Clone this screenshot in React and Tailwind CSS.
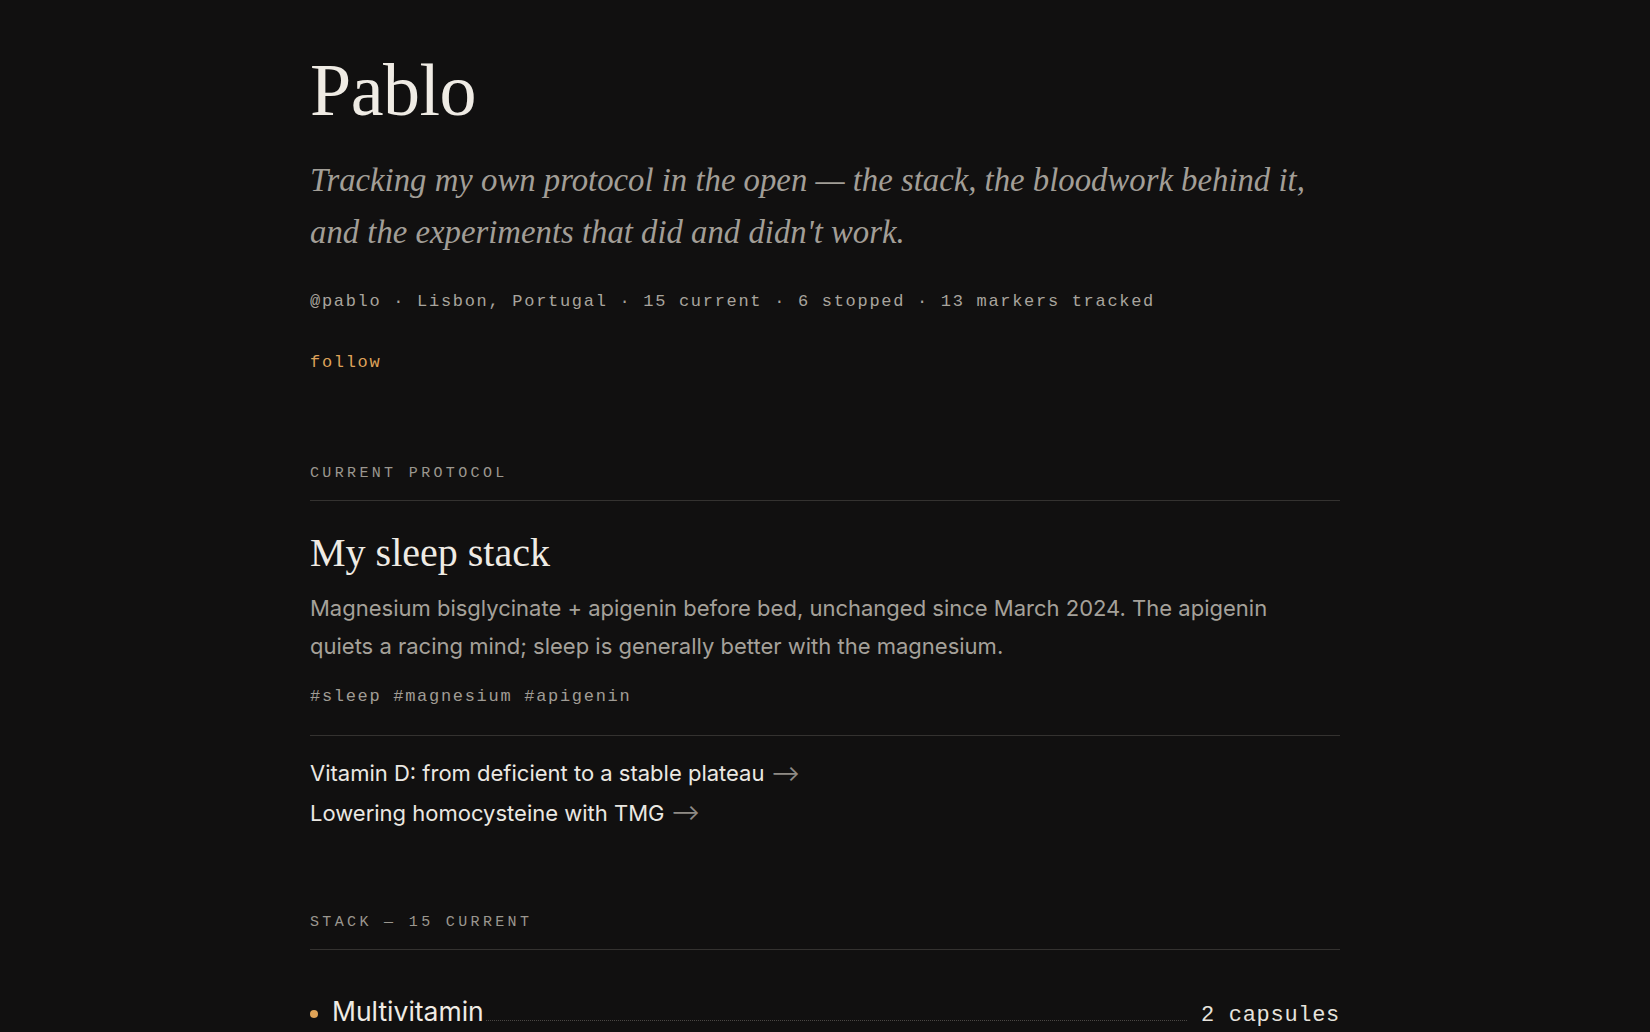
const serif = "font-['Liberation_Serif','DejaVu_Serif',serif]";
const sans = "font-['Inter','Liberation_Sans',sans-serif]";
const mono = "font-['Liberation_Mono','DejaVu_Sans_Mono',monospace]";

const links = [
  "Vitamin D: from deficient to a stable plateau",
  "Lowering homocysteine with TMG",
];

export default function App() {
  return (
    <div className="min-h-screen bg-[#111010] text-[#ece8e1]">
      <main className="w-[1030px] mx-auto pt-[53px] pb-16">
        {/* header */}
        <h1 className={`${serif} text-[74px] leading-none tracking-[-0.5px] text-[#efebe4]`}>
          Pablo
        </h1>
        <p className={`${serif} italic text-[32.75px] leading-[52px] mt-[27px] max-w-[1010px] text-[#a29e97]`}>
          Tracking my own protocol in the open — the stack, the bloodwork behind it,
          and the experiments that did and didn't work.
        </p>
        <p className={`${mono} text-[17px] leading-[28px] tracking-[1.7px] mt-[30px] text-[#a8a49d]`}>
          @pablo · Lisbon, Portugal · 15 current · 6 stopped · 13 markers tracked
        </p>
        <button className={`${mono} block text-[17px] leading-[28px] tracking-[1.7px] mt-[33px] text-[#dea25a]`}>
          follow
        </button>

        {/* current protocol */}
        <div
          className={`${mono} mt-[85px] pb-[14px] border-b border-[#343230] text-[15px] leading-[24px] tracking-[3.35px] uppercase text-[#9b978f]`}
        >
          Current protocol
        </div>
        <div className="pb-[24px] border-b border-[#343230]">
          <h2 className={`${serif} text-[40px] leading-[48px] mt-[28px] text-[#efebe4]`}>
            My sleep stack
          </h2>
          <p className={`${sans} text-[22px] leading-[38px] mt-[12px] max-w-[990px] text-[#a5a19a]`}>
            Magnesium bisglycinate + apigenin before bed, unchanged since March 2024. The apigenin
            quiets a racing mind; sleep is generally better with the magnesium.
          </p>
          <p className={`${mono} text-[17px] leading-[28px] tracking-[1.7px] mt-[18px] text-[#a09c95]`}>
            #sleep #magnesium #apigenin
          </p>
        </div>
        <ul className="mt-[17px]">
          {links.map((l) => (
            <li key={l} className={`${sans} text-[22px] leading-[40px] text-[#ebe8e2]`}>
              {l} <span className="text-[#8f8b85]">⟶</span>
            </li>
          ))}
        </ul>

        {/* stack */}
        <div
          className={`${mono} mt-[78px] pb-[14px] border-b border-[#343230] text-[15px] leading-[24px] tracking-[3.35px] uppercase text-[#9b978f]`}
        >
          Stack — 15 current
        </div>
        <div className="mt-[43px] flex items-baseline gap-[14px]">
          <span className="w-[8px] h-[8px] rounded-full bg-[#e0a458] self-center shrink-0" />
          <span className={`${sans} text-[26.5px] leading-[36px] text-[#efebe4]`}>Multivitamin</span>
          <span className="flex-1 border-b border-dotted border-[#4a4744] -ml-[12px]" />
          <span className={`${mono} text-[22px] leading-[36px] tracking-[0.7px] text-[#e6e3dd]`}>
            2 capsules
          </span>
        </div>
      </main>
    </div>
  );
}
